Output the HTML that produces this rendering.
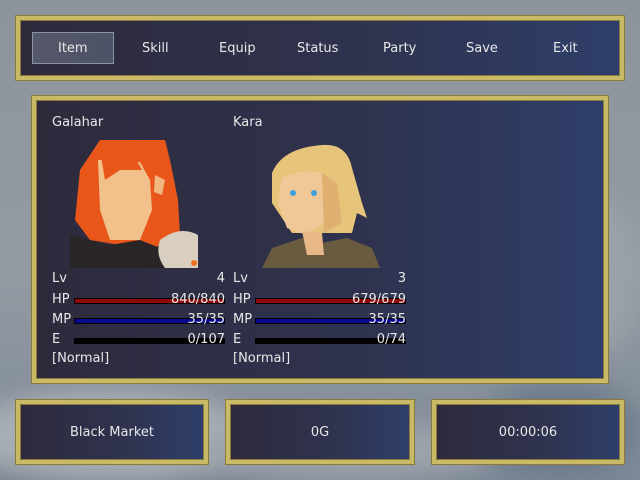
<!DOCTYPE html>
<html style="width:640px;height:480px;overflow:hidden"><head><meta charset="utf-8"><style>
*{margin:0;padding:0;box-sizing:border-box}
body{width:640px;height:480px;overflow:hidden;position:relative;font-family:"DejaVu Sans","Liberation Sans",sans-serif;font-size:13px;color:#e8e8e8;
background:linear-gradient(180deg,#8e949c 0%,#939aa2 55%,#8a949e 75%,#7d8896 100%);}
.cloud{position:absolute;border-radius:50%;filter:blur(12px);}
.win{position:absolute;border:4px solid #c9ba68;box-shadow:0 0 0 1px #8c7838 inset,0 0 0 1px #8c7838;
background:linear-gradient(90deg,#2e2a3c 0%,#2f3350 60%,#2f3f6a 100%);}
.t{position:absolute;white-space:nowrap;line-height:16px}
.r{text-align:right}
.bar{position:absolute;height:6px;border:1px solid #000;background:#000}
.bar i{display:block;height:100%}
</style></head><body>
<div class="cloud" style="left:-40px;top:390px;width:300px;height:90px;background:#a7adb4"></div>
<div class="cloud" style="left:200px;top:420px;width:300px;height:60px;background:#9aa2aa"></div>
<div class="cloud" style="left:480px;top:380px;width:160px;height:100px;background:#6f7c8c"></div>
<div class="cloud" style="left:560px;top:200px;width:80px;height:150px;background:#9aa1a8"></div>

<div class="win" style="left:16px;top:16px;width:608px;height:64px"></div>
<div style="position:absolute;left:32px;top:32px;width:82px;height:32px;border:1px solid #8a94a0;background:linear-gradient(90deg,#55586a,#4e5266)"></div>
<div class="t" style="left:58px;top:41px">Item</div>
<div class="t" style="left:142px;top:41px">Skill</div>
<div class="t" style="left:219px;top:41px">Equip</div>
<div class="t" style="left:297px;top:41px">Status</div>
<div class="t" style="left:383px;top:41px">Party</div>
<div class="t" style="left:466px;top:41px">Save</div>
<div class="t" style="left:553px;top:41px">Exit</div>

<div class="win" style="left:32px;top:96px;width:576px;height:287px"></div>
<div class="t" style="left:52px;top:115px">Galahar</div>
<div class="t" style="left:233px;top:115px">Kara</div>

<svg style="position:absolute;left:70px;top:140px" width="128" height="128" viewBox="0 0 128 128">
<path d="M30 0 L95 0 L100 20 L108 60 L110 95 L80 110 L20 100 L5 80 L10 30 Z" fill="#e8561a"/>
<path d="M28 20 L70 22 L80 40 L82 70 L70 100 L40 100 L30 70 Z" fill="#f2c08a"/>
<path d="M30 10 L60 8 L72 30 L50 30 L35 40 Z" fill="#e8561a"/>
<path d="M85 35 L95 40 L92 55 L84 52 Z" fill="#f0b880"/>
<path d="M0 95 L40 105 L70 100 L95 110 L128 105 L128 128 L0 128 Z" fill="#2a2628"/>
<path d="M90 100 Q110 85 128 95 L128 128 L95 128 Q85 115 90 100 Z" fill="#d8cfc0"/>
<circle cx="124" cy="123" r="3" fill="#f07020"/>
</svg>
<svg style="position:absolute;left:262px;top:143px" width="118" height="125" viewBox="0 0 118 125">
<path d="M10 30 Q20 5 60 2 Q85 0 90 25 L100 60 L105 75 L95 70 L90 90 L30 90 L10 60 Z" fill="#e6c47a"/>
<path d="M20 35 Q40 25 60 30 L62 80 L45 92 L25 85 L16 60 Z" fill="#f0c898"/>
<path d="M60 30 L75 40 L80 80 L62 90 Z" fill="#e0b070"/>
<circle cx="31" cy="50" r="3" fill="#3aa0e0"/><circle cx="52" cy="50" r="3" fill="#3aa0e0"/>
<path d="M0 125 L10 105 L40 95 L60 100 L85 95 L110 105 L118 125 Z" fill="#6a5a40"/>
<path d="M40 88 L60 90 L62 112 L45 112 Z" fill="#e8b888"/>
</svg>

<div class="t" style="left:52px;top:271px">Lv</div><div class="t r" style="left:125px;width:100px;top:271px">4</div>
<div class="t" style="left:233px;top:271px">Lv</div><div class="t r" style="left:306px;width:100px;top:271px">3</div>

<div class="t" style="left:52px;top:292px">HP</div>
<div class="bar" style="left:74px;top:298px;width:151px"><i style="width:100%;background:#8e0a0a"></i></div>
<div class="t r" style="left:125px;width:100px;top:292px">840/840</div>
<div class="t" style="left:233px;top:292px">HP</div>
<div class="bar" style="left:255px;top:298px;width:151px"><i style="width:100%;background:#8e0a0a"></i></div>
<div class="t r" style="left:306px;width:100px;top:292px">679/679</div>

<div class="t" style="left:52px;top:312px">MP</div>
<div class="bar" style="left:74px;top:318px;width:151px"><i style="width:100%;background:#0a0a8e"></i></div>
<div class="t r" style="left:125px;width:100px;top:312px">35/35</div>
<div class="t" style="left:233px;top:312px">MP</div>
<div class="bar" style="left:255px;top:318px;width:151px"><i style="width:100%;background:#0a0a8e"></i></div>
<div class="t r" style="left:306px;width:100px;top:312px">35/35</div>

<div class="t" style="left:52px;top:332px">E</div>
<div class="bar" style="left:74px;top:338px;width:151px"></div>
<div class="t r" style="left:125px;width:100px;top:332px">0/107</div>
<div class="t" style="left:233px;top:332px">E</div>
<div class="bar" style="left:255px;top:338px;width:151px"></div>
<div class="t r" style="left:306px;width:100px;top:332px">0/74</div>

<div class="t" style="left:52px;top:351px">[Normal]</div>
<div class="t" style="left:233px;top:351px">[Normal]</div>

<div class="win" style="left:16px;top:400px;width:192px;height:64px"></div>
<div class="t" style="left:16px;top:425px;width:192px;text-align:center">Black Market</div>
<div class="win" style="left:226px;top:400px;width:188px;height:64px"></div>
<div class="t" style="left:226px;top:425px;width:188px;text-align:center">0G</div>
<div class="win" style="left:432px;top:400px;width:192px;height:64px"></div>
<div class="t" style="left:432px;top:425px;width:192px;text-align:center">00:00:06</div>
</body></html>
